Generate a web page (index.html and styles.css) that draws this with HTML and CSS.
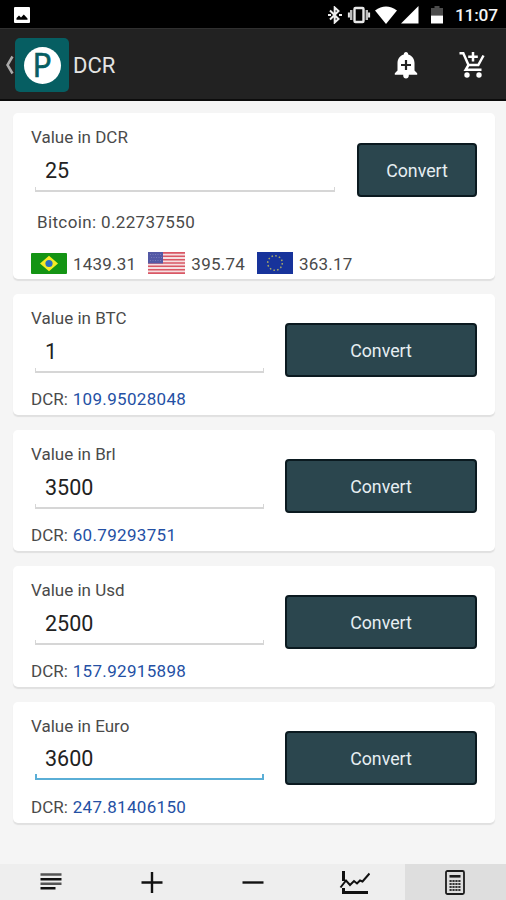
FILE: index.html
```html
<!DOCTYPE html>
<html lang="en">
<head>
<meta charset="utf-8">
<title>DCR</title>
<link rel="stylesheet" href="styles.css">
</head>
<body>
<div class="status">
  <svg class="st-photo" width="16" height="16" viewBox="0 0 16 16"><rect width="16" height="16" rx="1" fill="#fff"/><path d="M2.500 12.800V11l2.500-2.500 2 2L9.800 7.500l3.700 4v1.300z" fill="#000"/></svg>
  <div class="st-right">
    <svg class="st-bt" width="16" height="18" viewBox="0 0 16 18" fill="none" stroke="#eee" stroke-width="2"><path d="M3 4.500l8.500 8.500-3.800 3.500V1.500l3.800 3.500L3 13.500"/><path d="M1 9h3M12 9h3" stroke-width="2.200"/></svg>
    <svg class="st-vib" width="24" height="18" viewBox="0 0 24 18" fill="none" stroke="#e8e8e8"><rect x="7.500" y="2" width="9" height="14" rx="1" stroke-width="2.400"/><path d="M4.200 4v10M19.800 4v10" stroke-width="2.400" stroke="#bbb"/><path d="M1.900 6.500v5M22.100 6.500v5" stroke-width="2"/></svg>
    <svg class="st-wifi" width="22" height="18" viewBox="0 0 22 18"><path d="M0 4.500Q11-3.500 22 4.500L11 18z" fill="#fff"/></svg>
    <svg class="st-sig" width="18" height="18" viewBox="0 0 18 18"><path d="M0 17.500L17.500 0v17.500z" fill="#fff"/></svg>
    <svg class="st-bat" width="12" height="18" viewBox="0 0 12 18"><path d="M0 2h3.500V0h5v2H12v7.500H0z" fill="#4c4c4c"/><path d="M0 9.500h12v8H0z" fill="#fff"/></svg>
    <span class="clock">11:07</span>
  </div>
</div>
<header class="bar">
  <svg class="back" width="9" height="20" viewBox="0 0 9 20"><path d="M7.500 1.500L2.500 10l5 8.500" fill="none" stroke="#aaa" stroke-width="2.500"/></svg>
  <div class="logo"><span class="coin">P</span></div>
  <h1>DCR</h1>
  <svg class="bell" width="24" height="27" viewBox="0 0 24 27"><path d="M12 0c1.400 0 2.200 1 2.200 2.400C18.300 3.500 20.500 7 20.500 11v7.500l2.700 2.800v1.500H.8v-1.500l2.700-2.800V11c0-4 2.200-7.500 6.300-8.600C9.800 1 10.600 0 12 0zM9.200 22.500h5.600v1c0 1.900-1.200 3-2.800 3s-2.800-1.100-2.800-3z" fill="#fff"/><path d="M12 8v10M7 13h10" stroke="#222" stroke-width="2.200"/></svg>
  <svg class="cart" width="26" height="28" viewBox="0 0 26 28" fill="none" stroke="#fff" stroke-width="2.500"><path d="M.5 2.300h3.800L9.500 14h9.800L24.500 4.500M9.500 14l-2.800 4.700h15.800M14 1v9.500M9.200 5.700h9.600"/><circle cx="8" cy="24" r="2.700" fill="#fff" stroke="none"/><circle cx="20" cy="24" r="2.700" fill="#fff" stroke="none"/></svg>
</header>
<main>
  <section class="card card-first">
    <div class="row">
      <div class="field"><label>Value in DCR</label><div class="input">25</div></div>
      <button>Convert</button>
    </div>
    <p class="bitcoin">Bitcoin: 0.22737550</p>
    <div class="rates">
      <svg width="36" height="21" viewBox="0 0 36 21"><rect width="36" height="21" rx="1" fill="#149414"/><path d="M18 2.800L27 10.500 18 18.200 9 10.500z" fill="#f5ec25"/><circle cx="18" cy="10.500" r="3.600" fill="#2a6fc4"/></svg>
      <span>1439.31</span>
      <svg width="37" height="22" viewBox="0 0 37 22"><rect width="37" height="22" rx="1" fill="#f5dfe1"/><path d="M0 .9h37M0 4.300h37M0 7.700h37M0 11h37M0 14.300h37M0 17.700h37M0 21.100h37" stroke="#d95865" stroke-width="1.600"/><path d="M0 0h15v11.500H0z" fill="#5359a5"/><path d="M2 2.500h12M3 5.500h11M2 8.500h12" stroke="#777bb8" stroke-width="1" stroke-dasharray="1 1.500"/></svg>
      <span>395.74</span>
      <svg width="36" height="22" viewBox="0 0 36 22"><rect width="36" height="22" fill="#17339b"/><circle cx="18" cy="11" r="7.300" fill="none" stroke="#a5a668" stroke-width="1.500" stroke-dasharray="1.600 2.222"/></svg>
      <span>363.17</span>
    </div>
  </section>
  <section class="card">
    <div class="row">
      <div class="field"><label>Value in BTC</label><div class="input">1</div></div>
      <button>Convert</button>
    </div>
    <p class="result">DCR: <b>109.95028048</b></p>
  </section>
  <section class="card">
    <div class="row">
      <div class="field"><label>Value in Brl</label><div class="input">3500</div></div>
      <button>Convert</button>
    </div>
    <p class="result">DCR: <b>60.79293751</b></p>
  </section>
  <section class="card">
    <div class="row">
      <div class="field"><label>Value in Usd</label><div class="input">2500</div></div>
      <button>Convert</button>
    </div>
    <p class="result">DCR: <b>157.92915898</b></p>
  </section>
  <section class="card">
    <div class="row">
      <div class="field"><label>Value in Euro</label><div class="input focus">3600</div></div>
      <button>Convert</button>
    </div>
    <p class="result">DCR: <b>247.81406150</b></p>
  </section>
</main>
<nav>
  <div class="tab"><svg width="22" height="24" viewBox="0 0 22 24" stroke-width="2.400"><path d="M.5 4.500h21M.5 13.800h21" stroke="#555"/><path d="M.5 9.200h21M.5 18.300h15" stroke="#111"/></svg></div>
  <div class="tab"><svg width="22" height="24" viewBox="0 0 22 24" stroke="#111" stroke-width="2.400"><path d="M.5 12.500h21M11 2v21"/></svg></div>
  <div class="tab"><svg width="22" height="24" viewBox="0 0 22 24" stroke="#111" stroke-width="2.400"><path d="M.5 12.500h21"/></svg></div>
  <div class="tab"><svg width="31" height="26" viewBox="0 0 31 26" fill="none" stroke="#111"><path d="M4.500 2v10M4.500 19v4.500H29" stroke-width="3"/><path d="M1.500 18.500l5.500-7 4 4.500 4-4 3 2.500 3-3 2.500 1 7-8" stroke-width="2"/></svg></div>
  <div class="tab active"><svg width="20" height="25" viewBox="0 0 20 25" fill="none" stroke="#1c1c1c"><rect x="1" y="1" width="18" height="23" rx="1.500" stroke-width="1.800"/><path d="M4.500 6.300h11" stroke-width="2.600"/><path d="M4.500 11h11M4.500 14h11M4.500 17h11M4.500 20h11" stroke="#333" stroke-width="2" stroke-dasharray="2.200 .73"/></svg></div>
</nav>
</body>
</html>
```
FILE: styles.css
```css
* { box-sizing: border-box; }
body {
  margin: 0;
  height: 900px;
  display: flex;
  flex-direction: column;
  overflow: hidden;
  background: #f5f5f5;
  color: #4a4a4a;
  font-family: Roboto, "Liberation Sans", sans-serif;
  font-size: 17px;
}
svg { display: block; flex: none; }
p, h1 { margin: 0; font-weight: 400; }

.status {
  height: 28px;
  flex: none;
  display: flex;
  justify-content: space-between;
  align-items: center;
  padding: 2px 8px 0 14px;
  background: #000;
}
.st-right { display: flex; align-items: center; }
.st-bt { margin-right: 4px; }
.st-vib { margin-right: 4px; }
.st-wifi { margin-right: 4px; }
.st-sig { margin-right: 12px; }
.st-bat { margin-right: 12px; }
.clock {
  width: 43px;
  color: #f4f4f4;
  font-size: 17.3px;
  font-weight: 500;
  line-height: 20px;
  letter-spacing: -0.2px;
  white-space: nowrap;
}

.bar {
  height: 73px;
  flex: none;
  display: flex;
  align-items: center;
  padding: 2px 21px 0 5px;
  background: #222;
  border-top: 1px solid #303030;
  border-bottom: 2px solid #0c0c0c;
}
.back { margin-right: 1px; }
.logo {
  width: 54px;
  height: 54px;
  flex: none;
  display: flex;
  align-items: center;
  justify-content: center;
  border-radius: 5px;
  background: #065e62;
}
.coin {
  width: 37px;
  height: 37px;
  border-radius: 50%;
  background: #fff;
  color: #065e62;
  font: 400 32px/36px "Open Sans", sans-serif;
  -webkit-text-stroke: 0.7px #065e62;
  text-align: center;
}
h1 { margin-left: 4px; color: #e4e4e4; font-size: 22px; }
.bell { margin-left: auto; margin-right: -1px; }
.cart { margin-left: 42px; }

main { flex: 1; padding: 12px 11px 0 13px; }
.card {
  height: 121px;
  margin-bottom: 15px;
  padding: 14px 18px 0;
  border-radius: 5px;
  background: #fff;
  box-shadow: 0 2px 1px #e0e0e0;
}
.card-first { height: 166px; }
.row { display: flex; }
.field { flex: 1; }
label { display: block; line-height: 20px; }
.input {
  height: 45px;
  margin-left: 4px;
  padding: 11px 10px 0;
  color: #222;
  font-size: 21.5px;
  line-height: 26px;
  border-bottom: 2px solid #d6d6d6;
  background:
    linear-gradient(#d6d6d6, #d6d6d6) left bottom / 1px 3px no-repeat,
    linear-gradient(#d6d6d6, #d6d6d6) right bottom / 1px 3px no-repeat;
}
.input.focus {
  height: 44px;
  margin-bottom: 1px;
  padding-top: 10px;
  border-bottom-color: #5aaed6;
  background:
    linear-gradient(#5aaed6, #5aaed6) left bottom / 2px 4px no-repeat,
    linear-gradient(#5aaed6, #5aaed6) right bottom / 2px 4px no-repeat;
}
button {
  width: 192px;
  height: 54px;
  margin: 15px 0 0 21px;
  padding: 1px 0 0;
  border: 2px solid #0b1a20;
  border-radius: 4px;
  background: #2b464e;
  color: #e6eef2;
  font: 400 17.8px/49px Roboto, sans-serif;
}
.card-first button { width: 120px; margin: 16px 0 0 22px; padding: 0; }
.result { line-height: 20px; margin-top: 12px; }
.result b { margin-left: 0.7px; color: #2450a4; font-weight: 400; letter-spacing: 0.32px; }
.bitcoin { margin: 15px 0 0 6px; line-height: 20px; letter-spacing: 0.36px; }
.rates { display: flex; align-items: center; height: 22px; margin-top: 20px; }
.rates span { margin: 2px 0 0 6px; line-height: 20px; letter-spacing: 0.22px; }
.rates span + svg { margin-left: 12px; }

nav { display: flex; height: 36px; flex: none; background: #eee; }
.tab { flex: 1; display: flex; align-items: center; justify-content: center; }
.tab.active { background: #dedede; }
```
